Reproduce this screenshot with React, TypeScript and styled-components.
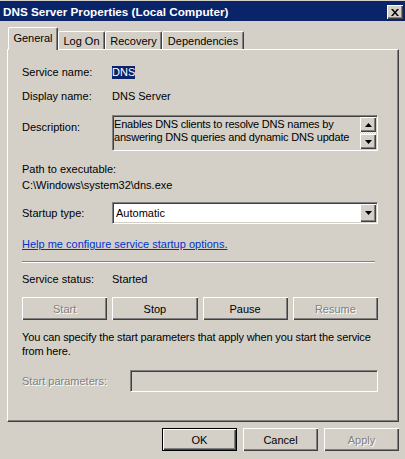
import styled, { createGlobalStyle, css } from "styled-components";

const FACE = "#d4d0c8";
const SHADOW = "#808080";
const DARK = "#404040";
const NAVY = "#0a246a";

const GlobalStyle = createGlobalStyle`
  html, body {
    margin: 0;
    padding: 0;
    background: ${FACE};
  }
  body {
    font-family: "Liberation Sans", Tahoma, Arial, sans-serif;
    font-size: 11px;
    color: #000;
  }
  * {
    box-sizing: border-box;
  }
`;

const raised = css`
  border: none;
  background: ${FACE};
  box-shadow: inset 1px 1px 0 #fff, inset -1px -1px 0 ${DARK},
    inset -2px -2px 0 ${SHADOW};
`;

const sunken = css`
  border: 1px solid;
  border-color: ${SHADOW} #fff #fff ${SHADOW};
  box-shadow: inset 1px 1px 0 ${DARK}, inset -1px -1px 0 ${FACE};
`;

const disabledText = css`
  color: ${SHADOW};
  text-shadow: 1px 1px 0 #fff;
`;

const Window = styled.div`
  width: 405px;
  height: 459px;
  padding-top: 1px;
  display: flex;
  flex-direction: column;
  overflow: hidden;
`;

const TitleBar = styled.div`
  height: 20px;
  background: ${NAVY};
  display: flex;
  align-items: center;
  justify-content: space-between;
  padding: 0 2px 0 3px;
`;

const Title = styled.span`
  color: #fff;
  font-weight: bold;
  font-size: 11.7px;
  white-space: nowrap;
`;

const CloseButton = styled.div`
  ${raised};
  width: 16px;
  height: 14px;
  margin-top: 2px;
  display: flex;
  align-items: center;
  justify-content: center;
`;

const Body = styled.div`
  padding: 7px 6px 0 7px;
  display: flex;
  flex-direction: column;
`;

const TabStrip = styled.div`
  height: 21px;
  display: flex;
  align-items: flex-end;
  padding-left: 1px;
  position: relative;
  z-index: 1;
`;

const Tab = styled.div<{ $active?: boolean; $w: number }>`
  width: ${(p) => p.$w}px;
  height: ${(p) => (p.$active ? 23 : 18)}px;
  margin-bottom: ${(p) => (p.$active ? -1 : 0)}px;
  background: ${FACE};
  border-top: 1px solid #fff;
  border-left: 1px solid #fff;
  border-right: 1px solid ${DARK};
  border-radius: 2px 2px 0 0;
  box-shadow: inset -1px 0 0 ${SHADOW};
  display: flex;
  align-items: center;
  justify-content: center;
  padding-bottom: ${(p) => (p.$active ? 2 : 0)}px;
  white-space: nowrap;
`;

const Panel = styled.div`
  width: 392px;
  height: 373px;
  border: 1px solid;
  border-color: #fff ${DARK} ${DARK} #fff;
  box-shadow: inset -1px -1px 0 ${SHADOW};
  padding: 16px 20px 0 14px;
  display: flex;
  flex-direction: column;
`;

const FieldRow = styled.div<{ $gap?: number; $label?: number; $top?: boolean }>`
  display: grid;
  grid-template-columns: ${(p) => p.$label ?? 90}px 1fr;
  align-items: ${(p) => (p.$top ? "start" : "center")};
  margin-top: ${(p) => p.$gap ?? 0}px;
  line-height: 13px;
  white-space: nowrap;
`;

const Label = styled.span<{ $disabled?: boolean; $offset?: number }>`
  padding-top: ${(p) => p.$offset ?? 0}px;
  ${(p) => p.$disabled && disabledText};
`;

const Selected = styled.span`
  background: ${NAVY};
  color: #fff;
  justify-self: start;
`;

const TextLine = styled.div<{ $gap?: number }>`
  margin-top: ${(p) => p.$gap ?? 0}px;
  line-height: 13px;
  white-space: nowrap;
`;

const DescriptionBox = styled.div`
  ${sunken};
  height: 36px;
  display: flex;
  background: ${FACE};
`;

const DescriptionText = styled.div`
  flex: 1;
  padding: 2px 0 0 1px;
  line-height: 13px;
  letter-spacing: -0.2px;
  white-space: nowrap;
  overflow: hidden;
`;

const ScrollBar = styled.div`
  width: 16px;
  margin: 1px 1px 1px 0;
  display: flex;
  flex-direction: column;
  background-color: #fff;
  background-image: repeating-conic-gradient(${FACE} 0 25%, #fff 0 50%);
  background-size: 2px 2px;
`;

const ScrollTrack = styled.div`
  flex: 1;
`;

const ArrowButton = styled.div`
  ${raised};
  width: 16px;
  height: 15px;
  display: flex;
  align-items: center;
  justify-content: center;
`;

const Combo = styled.div`
  ${sunken};
  height: 22px;
  background: #fff;
  display: flex;
  align-items: center;
  padding: 1px;
`;

const ComboText = styled.span`
  flex: 1;
  padding-left: 2px;
`;

const ComboButton = styled(ArrowButton)`
  height: 18px;
`;

const HelpLink = styled.a`
  display: block;
  margin-top: 14px;
  line-height: 13px;
  color: #0033cc;
  text-decoration: underline;
  cursor: pointer;
  align-self: flex-start;
`;

const Separator = styled.div`
  margin-top: 10px;
  width: 353px;
  height: 2px;
  border-top: 1px solid ${SHADOW};
  border-bottom: 1px solid #fff;
`;

const ServiceButtons = styled.div`
  margin-top: 11px;
  display: grid;
  grid-template-columns: repeat(4, 1fr);
  gap: 5px;
`;

const Button = styled.button<{ $disabled?: boolean; $default?: boolean }>`
  ${raised};
  height: 23px;
  padding: 0;
  font: inherit;
  color: #000;
  ${(p) => p.$disabled && disabledText};
  ${(p) =>
    p.$default &&
    css`
      border: 1px solid #000;
    `};
`;

const Paragraph = styled.p`
  margin: 10px 0 0;
  line-height: 14px;
  letter-spacing: -0.15px;
  white-space: nowrap;
`;

const ParamInput = styled.div`
  ${sunken};
  height: 22px;
  background: ${FACE};
`;

const Footer = styled.div`
  margin-top: 6px;
  display: flex;
  justify-content: flex-end;
  gap: 6px;
`;

const DialogButton = styled(Button)`
  width: 75px;
`;

const Arrow = ({ up }: { up?: boolean }) => (
  <svg width="7" height="4" viewBox="0 0 7 4">
    <polygon points={up ? "3.5,0 7,4 0,4" : "0,0 7,0 3.5,4"} fill="#000" />
  </svg>
);

const tabs = [
  { name: "General", w: 50, active: true },
  { name: "Log On", w: 47 },
  { name: "Recovery", w: 57 },
  { name: "Dependencies", w: 82 },
];

export default function App() {
  return (
    <>
      <GlobalStyle />
      <Window>
        <TitleBar>
          <Title>DNS Server Properties (Local Computer)</Title>
          <CloseButton>
            <svg width="8" height="7" viewBox="0 0 8 7">
              <path d="M0 0h2l2 2.5L6 0h2L5 3.5 8 7H6L4 4.5 2 7H0l3-3.5z" fill="#000" />
            </svg>
          </CloseButton>
        </TitleBar>
        <Body>
          <TabStrip>
            {tabs.map((t) => (
              <Tab key={t.name} $w={t.w} $active={t.active}>
                {t.name}
              </Tab>
            ))}
          </TabStrip>
          <Panel>
            <FieldRow>
              <Label>Service name:</Label>
              <Selected>DNS</Selected>
            </FieldRow>
            <FieldRow $gap={11}>
              <Label>Display name:</Label>
              <span>DNS Server</span>
            </FieldRow>
            <FieldRow $gap={12} $top>
              <Label $offset={6}>Description:</Label>
              <DescriptionBox>
                <DescriptionText>
                  Enables DNS clients to resolve DNS names by
                  <br />
                  answering DNS queries and dynamic DNS update
                </DescriptionText>
                <ScrollBar>
                  <ArrowButton>
                    <Arrow up />
                  </ArrowButton>
                  <ScrollTrack />
                  <ArrowButton>
                    <Arrow />
                  </ArrowButton>
                </ScrollBar>
              </DescriptionBox>
            </FieldRow>
            <TextLine $gap={12}>Path to executable:</TextLine>
            <TextLine $gap={3}>C:\Windows\system32\dns.exe</TextLine>
            <FieldRow $gap={10}>
              <Label>Startup type:</Label>
              <Combo>
                <ComboText>Automatic</ComboText>
                <ComboButton>
                  <Arrow />
                </ComboButton>
              </Combo>
            </FieldRow>
            <HelpLink>Help me configure service startup options.</HelpLink>
            <Separator />
            <FieldRow $gap={10}>
              <Label>Service status:</Label>
              <span>Started</span>
            </FieldRow>
            <ServiceButtons>
              <Button $disabled>Start</Button>
              <Button>Stop</Button>
              <Button>Pause</Button>
              <Button $disabled>Resume</Button>
            </ServiceButtons>
            <Paragraph>
              You can specify the start parameters that apply when you start the service
              <br />
              from here.
            </Paragraph>
            <FieldRow $gap={12} $label={108}>
              <Label $disabled>Start parameters:</Label>
              <ParamInput />
            </FieldRow>
          </Panel>
          <Footer>
            <DialogButton $default>OK</DialogButton>
            <DialogButton>Cancel</DialogButton>
            <DialogButton $disabled>Apply</DialogButton>
          </Footer>
        </Body>
      </Window>
    </>
  );
}
